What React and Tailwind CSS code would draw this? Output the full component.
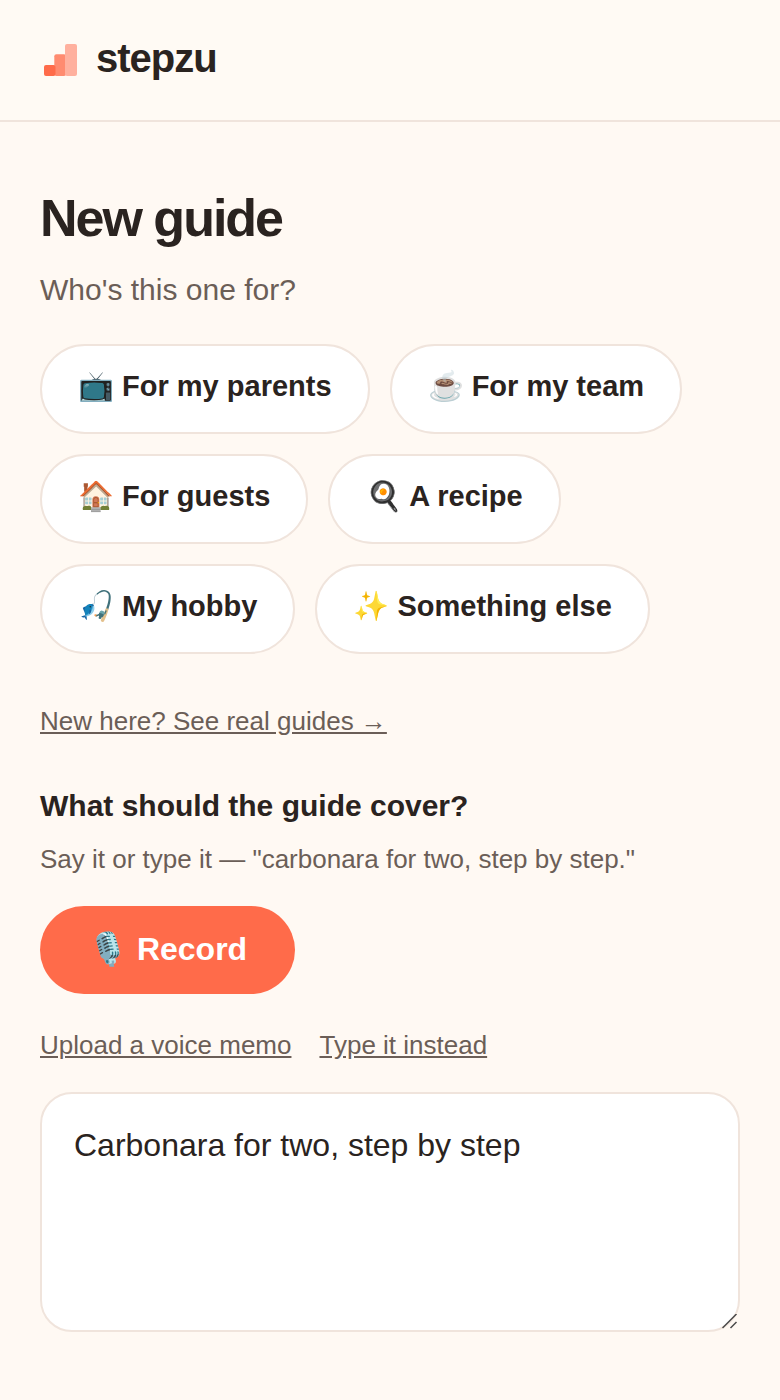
import React, { useState } from 'react';

const audiences = [
  { emoji: '📺', label: 'For my parents' },
  { emoji: '☕', label: 'For my team' },
  { emoji: '🏠', label: 'For guests' },
  { emoji: '🍳', label: 'A recipe' },
  { emoji: '🎣', label: 'My hobby' },
  { emoji: '✨', label: 'Something else' },
];

function Logo() {
  return (
    <svg viewBox="0 0 40 40" className="w-10 h-10" aria-hidden="true">
      <rect x="4" y="25" width="11.5" height="11" rx="2" fill="#ff6b4a" />
      <rect x="14.3" y="14.3" width="11.7" height="21.7" rx="2" fill="#ff6b4a" fillOpacity="0.78" />
      <rect x="25" y="4" width="12" height="32" rx="2" fill="#ffb09e" />
    </svg>
  );
}

function ResizeGrip() {
  return (
    <svg viewBox="0 0 16 16" className="absolute bottom-0.5 right-0.5 w-4 h-4 pointer-events-none" aria-hidden="true">
      <path d="M0.5 14L14.5 0M8.5 14L14.5 8" stroke="#4a4a4a" strokeWidth="1.5" fill="none" />
    </svg>
  );
}

function App() {
  const [topic, setTopic] = useState('Carbonara for two, step by step');

  return (
    <div className="min-h-screen bg-[#fff9f3] text-[#2a2320] font-['Liberation_Sans',Arial,sans-serif]">
      <header className="flex items-center gap-4 h-[122px] px-10 bg-[#fffaf4] border-b-2 border-[#f0e4dc]">
        <Logo />
        <span className="pb-1 text-[40px] leading-12 font-bold tracking-tight">stepzu</span>
      </header>

      <main className="px-10 pt-16 pb-16">
        <h1 className="text-[52px] leading-16 font-bold tracking-[-2px]">New guide</h1>
        <p className="mt-4 text-[30px] leading-12 text-[#6b5e57]">Who's this one for?</p>

        {/* Audience chips */}
        <div className="mt-[30px] flex flex-wrap gap-5">
          {audiences.map(({ emoji, label }) => (
            <button
              key={label}
              type="button"
              className="h-[90px] px-9 pb-1 rounded-full border-2 border-[#f0e4dc] bg-white text-[29px] font-bold"
            >
              {emoji} {label}
            </button>
          ))}
        </div>

        <a href="#guides" className="mt-[47px] block w-fit text-[26px] leading-10 underline text-[#6b5e57]">
          New here? See real guides →
        </a>

        <label htmlFor="topic" className="mt-[41px] block text-[30px] leading-12 font-bold">
          What should the guide cover?
        </label>
        <p className="mt-[9px] text-[26px] leading-10 text-[#6b5e57]">
          Say it or type it — "carbonara for two, step by step."
        </p>

        <button type="button" className="mt-[27px] h-[88px] px-12 pb-0.5 rounded-full bg-[#ff6b4a] text-white text-[32px] font-bold">
          🎙️ Record
        </button>

        <div className="mt-[31px] flex gap-7 text-[26px] leading-10 text-[#6b5e57]">
          <button type="button" className="underline">Upload a voice memo</button>
          <button type="button" className="underline">Type it instead</button>
        </div>

        <div className="relative mt-[27px]">
          <textarea
            id="topic"
            value={topic}
            onChange={(e) => setTopic(e.target.value)}
            className="block w-full h-[240px] px-8 py-[27px] rounded-[32px] border-2 border-[#f0e4dc] bg-white text-[32px] leading-12 resize-y [&::-webkit-resizer]:bg-transparent"
          />
          <ResizeGrip />
        </div>
      </main>
    </div>
  );
}

export default App;
